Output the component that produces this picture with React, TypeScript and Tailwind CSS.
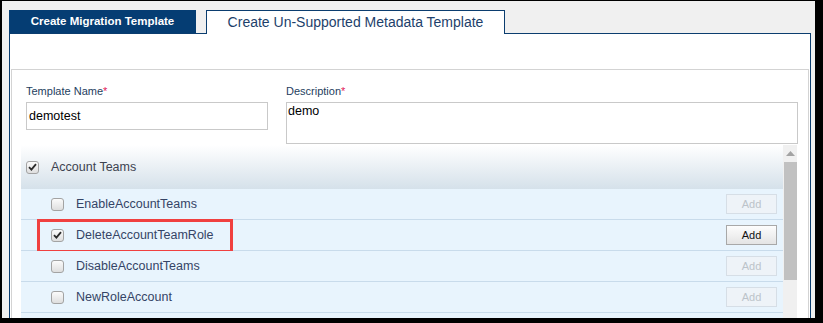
import type { ReactNode } from "react";

const FONT = { fontFamily: '"Liberation Sans", Arial, sans-serif' };

type Item = { name: string; checked: boolean; highlight?: boolean };

const items: Item[] = [
  { name: "EnableAccountTeams", checked: false },
  { name: "DeleteAccountTeamRole", checked: true, highlight: true },
  { name: "DisableAccountTeams", checked: false },
  { name: "NewRoleAccount", checked: false },
  { name: "", checked: false },
];

function Checkbox({ checked }: { checked: boolean }) {
  return (
    <div className="flex h-[13px] w-[13px] shrink-0 items-center justify-center rounded-[3px] border border-[#a3a3a3] bg-gradient-to-b from-[#fbfbfb] to-[#dedede]">
      {checked && (
        <svg width="9" height="8" viewBox="0 0 9 8">
          <path d="M1 4.2 L3.4 6.6 L8 1.2" fill="none" stroke="#2b2b2b" strokeWidth="1.8" />
        </svg>
      )}
    </div>
  );
}

function AddButton({ enabled }: { enabled: boolean }) {
  return enabled ? (
    <button className="h-[20px] w-[51px] border border-[#a8a8a8] bg-gradient-to-b from-[#fdfdfd] to-[#e4e4e4] text-[11px] text-[#111]">
      Add
    </button>
  ) : (
    <button className="h-[20px] w-[51px] border border-[#d6dee6] bg-[#eef3f8] text-[11px] text-[#bcc3ca]">
      Add
    </button>
  );
}

function Label({ children }: { children: ReactNode }) {
  return (
    <div className="mb-[5px] h-[12px] text-[11px] leading-[12px] text-[#24405e]">
      {children}
      <span className="text-[#e2215a]">*</span>
    </div>
  );
}

export default function App() {
  return (
    <div className="h-[323px] w-[823px] bg-black pb-[5px] pl-[2px] pr-[8px] pt-[1px]" style={FONT}>
      <div className="flex h-full flex-col overflow-hidden bg-[#f0f0f0] pl-[7px] pr-[4px] pt-[9px]">
        {/* tabs */}
        <div className="relative z-10 flex h-[24px] gap-[10px]">
          <div className="flex h-[23px] w-[187px] items-center justify-center bg-[#053d73] text-[11.5px] font-bold text-white">
            Create Migration Template
          </div>
          <div className="flex h-[24px] w-[299px] items-center justify-center border-x border-t border-[#0b3d6f] bg-white pb-[1px] text-[14px] text-[#1d3f6b]">
            Create Un-Supported Metadata Template
          </div>
        </div>

        {/* panel */}
        <div className="-mt-[1px] flex-1 border border-[#0b3d6f] bg-white px-[1px] pt-[35px]">
          <div className="h-full border border-[#d3d3d3] bg-white">
            <div className="flex gap-[18px] pl-[14px] pr-[10px] pt-[15px]">
              <div className="w-[242px]">
                <Label>Template Name</Label>
                <div className="flex h-[28px] items-center border border-[#c9c9c9] pl-[2px] text-[12.5px] text-black">
                  demotest
                </div>
              </div>
              <div className="w-[512px]">
                <Label>Description</Label>
                <div className="h-[42px] border border-[#c9c9c9] pl-[1px] pt-[1px] text-[12.5px] leading-[15px] text-black">
                  demo
                </div>
              </div>
            </div>

            {/* list */}
            <div className="ml-[9px] mr-[11px] mt-[1px] flex">
              <div className="flex-1">
                <div className="flex h-[44px] items-center gap-[12px] bg-gradient-to-b from-white to-[#d5e1ea] pl-[5px]">
                  <Checkbox checked />
                  <span className="text-[12.5px] text-[#3d4350]">Account Teams</span>
                </div>
                {items.map((item, i) => (
                  <div
                    key={i}
                    className="relative flex h-[31px] items-center border-b border-[#c8dbeb] bg-[#e8f4fd] pl-[30px] pr-[6px]"
                  >
                    {item.name && (
                      <>
                        <Checkbox checked={item.checked} />
                        <span className="ml-[12px] flex-1 text-[12.5px] text-[#354466]">{item.name}</span>
                        <AddButton enabled={item.checked} />
                      </>
                    )}
                    {item.highlight && (
                      <div className="absolute left-[16px] top-[-1px] h-[34px] w-[196px] border-[3px] border-[#f0403f]" />
                    )}
                  </div>
                ))}
              </div>
              {/* scrollbar */}
              <div className="flex w-[14px] flex-col items-center bg-[#f0f0f0]">
                <svg width="9" height="5" viewBox="0 0 9 5" className="mt-[6px]">
                  <path d="M0 5 L4.5 0 L9 5 Z" fill="#a3a3a3" />
                </svg>
                <div className="mt-[6px] h-[118px] w-[13px] bg-[#c1c1c1]" />
              </div>
            </div>
          </div>
        </div>
      </div>
    </div>
  );
}
